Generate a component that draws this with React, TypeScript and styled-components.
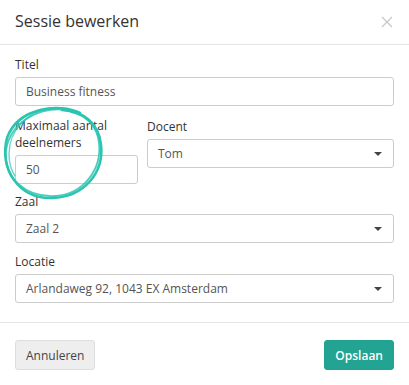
import styled, { createGlobalStyle } from "styled-components";

const GlobalStyle = createGlobalStyle`
  html, body {
    margin: 0;
    padding: 0;
    background: #ffffff;
  }
  body {
    font-family: "Open Sans", "Liberation Sans", sans-serif;
  }
`;

const Modal = styled.div`
  position: relative;
  width: 409px;
  height: 385px;
  background: #ffffff;
  box-sizing: border-box;
`;

const Header = styled.div`
  display: flex;
  align-items: center;
  justify-content: space-between;
  height: 45px;
  padding: 0 15px 0 15px;
  border-bottom: 1px solid #e5e5e5;
  box-sizing: border-box;
`;

const Title = styled.h4`
  margin: 0;
  font-size: 16px;
  font-weight: 400;
  color: #333333;
  padding-bottom: 2px;
`;

const Close = styled.button`
  border: none;
  background: none;
  padding: 0;
  margin-right: 1px;
  width: 12px;
  height: 12px;
  display: flex;
  cursor: pointer;
`;

const Body = styled.div`
  display: flex;
  flex-direction: column;
  gap: 10px;
  padding: 12px 15px 18px 15px;
  height: 278px;
  box-sizing: border-box;
  border-bottom: 1px solid #e5e5e5;
`;

const Row = styled.div`
  display: flex;
  align-items: flex-end;
  gap: 9px;
`;

const Field = styled.div<{ $width?: number; $lift?: number }>`
  display: flex;
  flex-direction: column;
  flex: ${(p) => (p.$width ? `0 0 ${p.$width}px` : "1 1 auto")};
  margin-bottom: ${(p) => p.$lift ?? 0}px;
`;

const Label = styled.label<{ $tall?: boolean }>`
  font-size: 12px;
  line-height: ${(p) => (p.$tall ? 17 : 16)}px;
  color: #333333;
  margin-bottom: 4px;
`;

const Input = styled.div`
  display: flex;
  align-items: center;
  justify-content: space-between;
  height: 29px;
  padding: 0 11px 0 10px;
  border: 1px solid #cccccc;
  border-radius: 3px;
  box-sizing: border-box;
  font-size: 12px;
  color: #555555;
`;

const Caret = styled.span`
  width: 0;
  height: 0;
  border-left: 4px solid transparent;
  border-right: 4px solid transparent;
  border-top: 4px solid #444444;
`;

const Footer = styled.div`
  display: flex;
  justify-content: space-between;
  align-items: center;
  padding: 17px 15px 0 15px;
`;

const Button = styled.button<{ $primary?: boolean }>`
  height: 30px;
  padding: 0 10px;
  border-radius: 3px;
  font-family: "Open Sans", "Liberation Sans", sans-serif;
  font-size: 12px;
  border: 1px solid ${(p) => (p.$primary ? "#22a38f" : "#dddddd")};
  background: ${(p) => (p.$primary ? "#23a391" : "#eeeeee")};
  color: ${(p) => (p.$primary ? "#ffffff" : "#444444")};
  font-weight: ${(p) => (p.$primary ? 600 : 400)};
  cursor: pointer;
`;

const Scribble = styled.svg`
  position: absolute;
  left: 0;
  top: 102px;
  pointer-events: none;
`;

function Select({ value }: { value: string }) {
  return (
    <Input>
      <span>{value}</span>
      <Caret />
    </Input>
  );
}

export default function App() {
  return (
    <>
      <GlobalStyle />
      <Modal>
        <Header>
          <Title>Sessie bewerken</Title>
          <Close aria-label="Sluiten">
            <svg width="12" height="12" viewBox="0 0 12 12">
              <path d="M1 1L11 11M11 1L1 11" stroke="#c8c8c8" strokeWidth="1.3" />
            </svg>
          </Close>
        </Header>
        <Body>
          <Field>
            <Label>Titel</Label>
            <Input>Business fitness</Input>
          </Field>
          <Row>
            <Field $width={123}>
              <Label $tall>
                Maximaal aantal
                <br />
                deelnemers
              </Label>
              <Input>50</Input>
            </Field>
            <Field $lift={16}>
              <Label>Docent</Label>
              <Select value="Tom" />
            </Field>
          </Row>
          <Field>
            <Label>Zaal</Label>
            <Select value="Zaal 2" />
          </Field>
          <Field>
            <Label>Locatie</Label>
            <Select value="Arlandaweg 92, 1043 EX Amsterdam" />
          </Field>
        </Body>
        <Footer>
          <Button>Annuleren</Button>
          <Button $primary>Opslaan</Button>
        </Footer>
        <Scribble width="110" height="104" viewBox="0 0 110 104">
          <g fill="none" stroke="#2cc4b0" strokeLinecap="round">
            <path d="M80 11 C60 1 18 5 7 36 C-1 66 18 97 52 96 C85 95 104 70 101 43 C99 22 84 9 62 8" strokeWidth="2.6" />
            <path d="M68 8 C40 4 11 19 6 48 C3 76 26 96 56 94 C83 92 102 68 99 41 C97 24 86 13 71 10" strokeWidth="1.8" opacity="0.85" />
            <path d="M52 6 C28 9 9 28 9 52 C9 60 11 68 15 74" strokeWidth="1.4" opacity="0.7" />
          </g>
        </Scribble>
      </Modal>
    </>
  );
}
